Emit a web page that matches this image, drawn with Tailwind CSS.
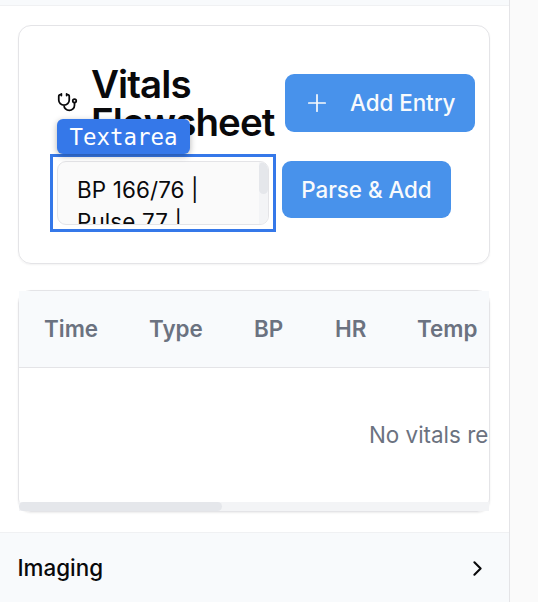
<!DOCTYPE html>
<html lang="en">
<head>
<meta charset="utf-8">
<title>Vitals Flowsheet</title>
<script src="https://cdn.jsdelivr.net/npm/@tailwindcss/browser@4"></script>
</head>
<body class="flex h-[602px] w-[538px] overflow-hidden bg-[#fafafa] font-['Inter',sans-serif] text-[22.4px] text-[#09090b]">
<main class="flex w-[510px] shrink-0 flex-col border-r border-[#e4e4e7] bg-white">
  <div class="h-[6px] shrink-0 border-b border-[#f0f1f3] bg-[#f8fafc]"></div>

  <section class="mt-[19px] ml-[18px] h-[239px] w-[472px] shrink-0 rounded-[13px] border border-[#e4e4e7] pt-[38px] pl-[38px] shadow-[0_1px_2px_rgba(0,0,0,0.05)]">
    <div class="flex h-[78px] items-center">
      <svg class="mr-[13px] size-[21px] shrink-0 -translate-y-px" viewBox="0 0 24 24" fill="none" stroke="currentColor" stroke-width="2" stroke-linecap="round" stroke-linejoin="round">
        <path d="M11 2v2M5 2v2M5 3H4a2 2 0 0 0-2 2v4a6 6 0 0 0 12 0V5a2 2 0 0 0-2-2h-1M8 15a6 6 0 0 0 12 0v-3"/><circle cx="20" cy="10" r="2"/>
      </svg>
      <h1 class="w-[194px] shrink-0 text-[38.5px] leading-[38.4px] font-semibold tracking-[-0.024em]">Vitals Flowsheet</h1>
      <button class="flex h-[58px] w-[190px] shrink-0 items-center rounded-[9px] bg-[#4892eb] pl-[21px] text-[#f8fafc]">
        <svg class="mr-[22px] size-[22px]" viewBox="0 0 22 22" fill="none" stroke="currentColor" stroke-width="1.7" stroke-linecap="round"><path d="M11 2.8v16.4M2.8 11h16.4"/></svg>
        <span class="font-medium tracking-[-0.002em] whitespace-nowrap">Add Entry</span>
      </button>
    </div>
    <div class="mt-[19px] flex items-start">
      <div class="relative h-[64px] w-[212px] shrink-0">
        <div class="flex size-full overflow-hidden rounded-[9px] border border-[#e4e4e7] bg-[#fafafa]">
          <div class="h-[62px] w-[201px] overflow-hidden pt-[12px] pl-[19px] leading-[32px] tracking-[0.006em] whitespace-nowrap">BP 166/76 |<br>Pulse 77 |</div>
          <div class="h-[62px] w-[9px] bg-[#f3f4f6]"><div class="h-[32px] rounded-full bg-[#e5e7eb]"></div></div>
        </div>
        <div class="absolute -top-[7px] -left-[7px] h-[78px] w-[226px] border-3 border-[#3578e9]"></div>
        <div class="absolute -top-[42px] left-0 flex h-[35px] w-[133px] items-center justify-center rounded-[6px] bg-[#3578e9] pt-[2px] font-['DejaVu_Sans_Mono',monospace] text-[22.4px] text-white shadow-[0_2px_6px_rgba(0,0,0,0.3)]">Textarea</div>
      </div>
      <button class="ml-[13px] h-[57px] w-[169px] shrink-0 rounded-[9px] bg-[#4892eb] font-medium tracking-[-0.002em] whitespace-nowrap text-[#f8fafc]">Parse &amp; Add</button>
    </div>
  </section>

  <section class="mt-[26px] ml-[18px] flex h-[222px] w-[472px] shrink-0 flex-col rounded-[13px] border border-[#e4e4e7] shadow-[0_1px_2px_rgba(0,0,0,0.08)]">
    <div class="flex h-[77px] shrink-0 items-center border-b border-[#e4e4e7] bg-[#f8fafc] pl-[25px] font-semibold text-[#6b7280]">
      <div class="w-[105px]">Time</div><div class="w-[105px]">Type</div><div class="w-[81px]">BP</div><div class="w-[82px]">HR</div><div>Temp</div>
    </div>
    <div class="flex h-[134px] shrink-0 items-center overflow-hidden pl-[350px] whitespace-nowrap text-[#6b7280]">No vitals recorded.</div>
    <div class="h-[9px] shrink-0 bg-[#f3f4f6]"><div class="h-full w-[203px] rounded-full bg-[#e5e7eb]"></div></div>
  </section>

  <section class="mt-[20px] flex h-[71px] shrink-0 items-center justify-between border-t border-[#f0f1f3] bg-[#f8fafc] pr-[19px] pl-[17.5px] font-medium">
    <span>Imaging</span>
    <svg class="size-[25px]" viewBox="0 0 24 24" fill="none" stroke="currentColor" stroke-width="2" stroke-linecap="round" stroke-linejoin="round"><path d="m9 18 6-6-6-6"/></svg>
  </section>
</main>
</body>
</html>
